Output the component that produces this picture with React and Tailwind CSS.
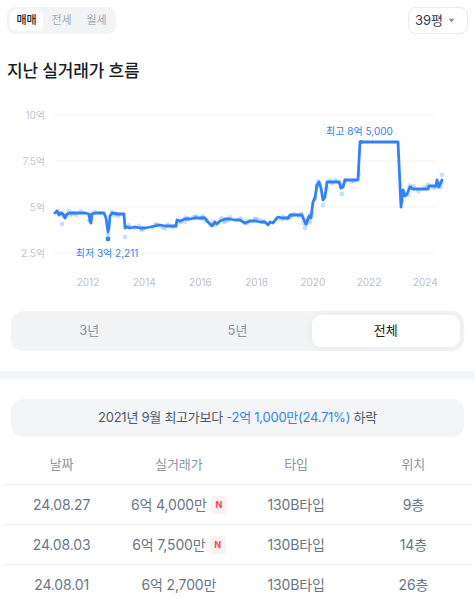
import React from 'react'

// price trend line, page coords (viewBox offset matches the page)
const LINE = [
  [55, 213], [57, 211], [59, 215], [61, 213], [63, 214], [65, 218], [67, 214], [70, 213], [75, 213], [80, 213],
  [85, 213], [89, 214], [90, 221], [91, 223], [92, 214], [95, 213], [100, 213], [104, 213], [106, 218], [108, 232],
  [109, 228], [110, 216], [112, 213], [118, 214], [124, 214], [125, 228], [127, 227], [130, 228], [135, 227],
  [140, 228], [145, 228], [150, 227], [155, 226], [160, 225], [165, 226], [170, 226], [176, 226], [177, 220],
  [180, 221], [185, 219], [190, 219], [195, 218], [200, 218], [205, 218], [208, 222], [212, 226], [215, 222],
  [217, 224], [220, 221], [225, 219], [230, 219], [235, 220], [240, 220], [245, 223], [250, 221], [255, 221],
  [260, 222], [265, 222], [268, 225], [270, 222], [273, 223], [276, 219], [278, 217], [282, 218], [288, 218],
  [290, 215], [295, 215], [302, 215], [304, 220], [306, 224], [309, 216], [311, 218], [313, 202], [315, 198],
  [317, 185], [319, 182], [321, 188], [323, 200], [325, 197], [327, 182], [333, 182], [339, 182], [341, 188],
  [343, 187], [345, 180], [350, 180], [358, 180], [360, 142], [398, 142], [401, 207], [403, 190], [405, 196],
  [407, 194], [410, 187], [413, 189], [428, 189], [429, 186], [436, 186], [437, 180], [439, 187], [442, 180],
]

function yAt(x) {
  for (let i = 1; i < LINE.length; i++) {
    const [x0, y0] = LINE[i - 1]
    const [x1, y1] = LINE[i]
    if (x <= x1) return y0 + ((x - x0) / (x1 - x0 || 1)) * (y1 - y0)
  }
  return LINE[LINE.length - 1][1]
}

function makeDots() {
  let s = 7
  const rnd = () => {
    s = (s * 16807) % 2147483647
    return s / 2147483647
  }
  const dots = []
  for (let x = 56; x < 442; x += 1.8) {
    if (x > 359 && x < 400) continue
    if (rnd() < 0.45) continue
    dots.push([x + (rnd() - 0.5) * 2, yAt(x) + (rnd() - 0.5) * 5])
  }
  return dots.concat([[62, 224], [125, 237], [108, 235], [342, 194], [323, 205], [442, 175], [402, 201], [305, 228], [310, 222]])
}

const DOTS = makeDots()
const GRID = [
  { y: 115, label: '10억' },
  { y: 161, label: '7.5억' },
  { y: 207, label: '5억' },
  { y: 253, label: '2.5억' },
]
const YEARS = [2012, 2014, 2016, 2018, 2020, 2022, 2024]

function PriceChart() {
  const path = LINE.map(([x, y], i) => `${i ? 'L' : 'M'}${x} ${y}`).join(' ')
  return (
    <svg width="475" height="200" viewBox="0 100 475 200" className="block">
      {GRID.map(g => (
        <g key={g.y}>
          <line x1="55" x2="435" y1={g.y} y2={g.y} stroke="#f0f2f4" strokeWidth="1" />
          <text x="45" y={g.y + 3.5} textAnchor="end" fontSize="10" fill="#c2c7ce">{g.label}</text>
        </g>
      ))}
      {YEARS.map((yr, i) => (
        <text key={yr} x={88 + i * 56.2} y="286" textAnchor="middle" fontSize="10" fill="#bcc1c8">{yr}</text>
      ))}
      {DOTS.map(([x, y], i) => (
        <circle key={i} cx={x} cy={y} r="2.4" fill="#3182f6" opacity="0.26" />
      ))}
      <path d={path} fill="none" stroke="#3182f6" strokeWidth="2.8" strokeLinejoin="round" strokeLinecap="round" />
      <circle cx="108" cy="239" r="2.4" fill="#3182f6" />
      <circle cx="361" cy="142" r="2" fill="#3182f6" />
      <text x="359.5" y="135" textAnchor="middle" fontSize="10" fill="#3182f6">최고 8억 5,000</text>
      <text x="107" y="257" textAnchor="middle" fontSize="10" fill="#3182f6">최저 3억 2,211</text>
    </svg>
  )
}

const ROWS = [
  { date: '24.08.27', price: '6억 4,000만', isNew: true, type: '130B타입', floor: '9층' },
  { date: '24.08.03', price: '6억 7,500만', isNew: true, type: '130B타입', floor: '14층' },
  { date: '24.08.01', price: '6억 2,700만', isNew: false, type: '130B타입', floor: '26층' },
]

export default function App() {
  return (
    <div className="h-[602px] w-[475px] overflow-hidden bg-white font-[Inter,'Noto_Sans_CJK_KR',sans-serif] text-[#191f28]">
      {/* deal type + size */}
      <div className="flex items-start justify-between px-[7px] pt-[7px]">
        <div className="flex gap-[2px] rounded-[8px] bg-[#f2f4f6] p-[3px]">
          {['매매', '전세', '월세'].map((t, i) => (
            <div
              key={t}
              className={`flex h-[21px] w-[33px] items-center justify-center rounded-[6px] text-[11px] ${i === 0 ? 'bg-white font-medium text-[#191f28]' : 'text-[#a3aab3]'}`}
            >
              {t}
            </div>
          ))}
        </div>
        <div className="flex h-[27px] items-center gap-[5px] rounded-[8px] border border-[#e8ebee] pl-[6px] pr-[12px] text-[13px] text-[#333d4b]">
          39평
          <svg width="7" height="5" viewBox="0 0 7 5">
            <path d="M0.5 0.8h6L3.5 4.4z" fill="#8b95a1" />
          </svg>
        </div>
      </div>

      <h2 className="mt-[25px] px-[7px] text-[17px] font-medium leading-[24px] tracking-[-0.01em] text-[#191f28]">지난 실거래가 흐름</h2>

      <div className="mt-[17px]">
        <PriceChart />
      </div>

      {/* period tabs */}
      <div className="mx-[11px] mt-[11px] grid h-[40px] grid-cols-3 rounded-[12px] bg-[#f2f4f6] p-[4px] text-[13px]">
        <div className="flex items-center justify-center text-[#8b95a1]">3년</div>
        <div className="flex items-center justify-center text-[#8b95a1]">5년</div>
        <div className="flex items-center justify-center rounded-[9px] bg-white text-[#191f28] shadow-[0_0_12px_rgba(0,0,0,0.05)]">전체</div>
      </div>

      <div className="mt-[20px] h-[8px] bg-[#f2f4f6]" />

      <div className="mx-[11px] mt-[20px] flex h-[38px] items-center justify-center rounded-[12px] bg-[#f4f5f7] text-[13px] tracking-[-0.02em] text-[#4e5968]">
        2021년 9월 최고가보다&nbsp;<span className="text-[#3182f6]">-2억 1,000만(24.71%)</span>&nbsp;하락
      </div>

      {/* recent deals */}
      <div className="mx-[3px] mt-[9px]">
        <div className="grid h-[39px] grid-cols-4 items-center border-b border-[#eef0f2] text-center text-[13px] text-[#8b95a1]">
          <div>날짜</div>
          <div>실거래가</div>
          <div>타입</div>
          <div>위치</div>
        </div>
        {ROWS.map(r => (
          <div key={r.date} className="grid h-[40px] grid-cols-4 items-center border-b border-[#eef0f2] text-center text-[14px] tracking-[-0.01em] text-[#6b7684]">
            <div>{r.date}</div>
            <div className="flex items-center justify-center gap-[4px]">
              {r.price}
              {r.isNew && (
                <span className="flex h-[18px] w-[16px] items-center justify-center rounded-[4px] bg-[#fff0f2] text-[9px] font-bold text-[#f04452]">N</span>
              )}
            </div>
            <div>{r.type}</div>
            <div>{r.floor}</div>
          </div>
        ))}
      </div>
    </div>
  )
}
